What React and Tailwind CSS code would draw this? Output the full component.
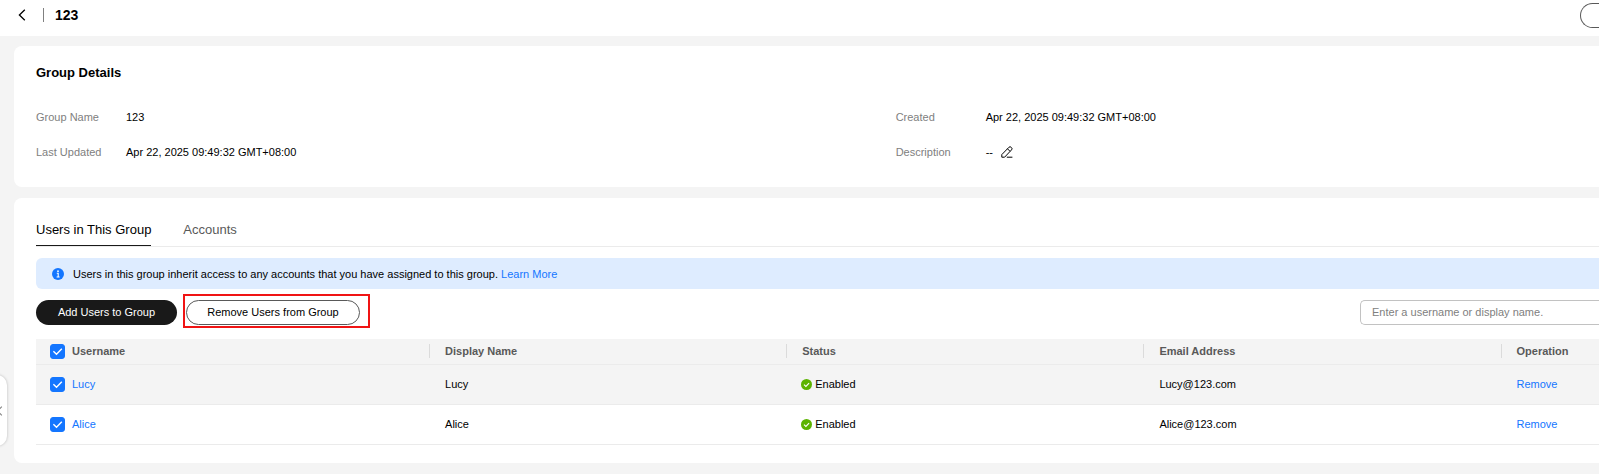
import { useState } from "react";

const users = [
  { id: "lucy", name: "Lucy", email: "Lucy@123.com" },
  { id: "alice", name: "Alice", email: "Alice@123.com" },
];

function ChevronLeft({ className }) {
  return (
    <svg viewBox="0 0 8 12" className={className} fill="none" stroke="currentColor" strokeWidth="1.3">
      <path d="M6.8 0.8 1.4 6l5.4 5.2" />
    </svg>
  );
}

function EditIcon() {
  return (
    <svg viewBox="0 0 12 12" className="size-3" fill="none" stroke="currentColor" strokeWidth="1" strokeLinejoin="round">
      <path d="M3.6 11.2H0.8V8.6L7.9 1.3a1.6 1.6 0 0 1 2.3 0l0.3 0.3a1.6 1.6 0 0 1 0 2.3Z" />
      <path d="M6.5 2.8 9 5.3M5.8 11.2h5.6" />
    </svg>
  );
}

function InfoIcon() {
  return (
    <svg viewBox="0 0 12 12" className="size-3 shrink-0">
      <circle cx="6" cy="6" r="6" fill="#1476ff" />
      <circle cx="6" cy="3.2" r="0.9" fill="#fff" />
      <path d="M4.8 5.2h1.4v3.6M4.6 9h3" fill="none" stroke="#fff" strokeWidth="1.1" />
    </svg>
  );
}

function EnabledIcon() {
  return (
    <svg viewBox="0 0 11 11" className="size-[11px]">
      <circle cx="5.5" cy="5.5" r="5.5" fill="#5cb300" />
      <path d="M3 5.6 4.9 7.4 8.1 4.2" fill="none" stroke="#fff" strokeWidth="1.1" />
    </svg>
  );
}

function Checkbox({ label, checked, onChange }) {
  return (
    <span className="grid size-[15px] shrink-0">
      <input
        type="checkbox"
        aria-label={label}
        checked={checked}
        onChange={onChange}
        className="col-start-1 row-start-1 size-[15px] appearance-none rounded-[3px] border border-[#c2c2c2] bg-white checked:border-[#1476ff] checked:bg-[#1476ff]"
      />
      {checked && (
        <svg viewBox="0 0 15 15" className="pointer-events-none col-start-1 row-start-1 size-[15px]" fill="none" stroke="#fff" strokeWidth="1.4">
          <path d="M3.4 7.2 6.5 10.2 11.8 4.8" />
        </svg>
      )}
    </span>
  );
}

function Field({ label, children }) {
  return (
    <div className="flex h-[35px] items-center">
      <dt className="w-[90px] text-[#808080]">{label}</dt>
      <dd className="flex items-center gap-2">{children}</dd>
    </div>
  );
}

function HeadCell({ children }) {
  return (
    <th className="p-0 text-left font-bold">
      <div className="flex h-[14px] items-center border-l border-[#dbdbdb] pl-[15px]">{children}</div>
    </th>
  );
}

export default function App() {
  const [selected, setSelected] = useState(users.map((u) => u.id));
  const [query, setQuery] = useState("");

  const allSelected = selected.length === users.length;

  function toggle(id) {
    setSelected((prev) => (prev.includes(id) ? prev.filter((x) => x !== id) : [...prev, id]));
  }

  return (
    <div className="relative min-h-screen overflow-hidden bg-[#f4f4f4] font-['Liberation_Sans',Arial,sans-serif] text-[11px] leading-4 text-black">
      <header className="flex h-9 items-start justify-between bg-white pt-[3px] pl-[18px]">
        <div className="flex h-[23px] items-center">
          <button type="button" aria-label="Back">
            <ChevronLeft className="h-3 w-2" />
          </button>
          <span className="ml-[17px] h-[14px] w-px bg-[#808080]" />
          <h1 className="ml-[11px] text-sm leading-4 font-bold">123</h1>
        </div>
        <button
          type="button"
          aria-label="More actions"
          className="h-[25px] w-[19px] rounded-l-full border border-r-0 border-[#595959] bg-white"
        />
      </header>

      <main className="flex flex-col gap-[11px] pt-[10px] pl-[14px]">
        <section className="rounded-l-lg bg-white pt-[18px] pb-[18px] pl-[22px]">
          <h2 className="text-[13px] leading-[18px] font-bold">Group Details</h2>
          <dl className="mt-[17px] grid grid-cols-[55%_45%]">
            <Field label="Group Name">123</Field>
            <Field label="Created">Apr 22, 2025 09:49:32 GMT+08:00</Field>
            <Field label="Last Updated">Apr 22, 2025 09:49:32 GMT+08:00</Field>
            <Field label="Description">
              <span>--</span>
              <button type="button" aria-label="Edit description">
                <EditIcon />
              </button>
            </Field>
          </dl>
        </section>

        <section className="rounded-l-lg bg-white pt-[18px] pb-[18px] pl-[22px]">
          <div role="tablist" className="flex gap-8 border-b border-[#ebebeb] text-[13px]">
            <button type="button" role="tab" aria-selected="true" className="h-[30px] border-b border-[#191919] pb-[2px]">
              Users in This Group
            </button>
            <button type="button" role="tab" aria-selected="false" className="h-[30px] pb-[2px] text-[#595959]">
              Accounts
            </button>
          </div>

          <div className="mt-[11px] flex h-[31px] items-center rounded-l-md bg-[#deecff] pl-4">
            <InfoIcon />
            <p className="ml-[9px]">
              Users in this group inherit access to any accounts that you have assigned to this group.{" "}
              <a href="#learn-more" className="text-[#1476ff]">
                Learn More
              </a>
            </p>
          </div>

          <div className="mt-[11px] flex justify-between">
            <div className="flex gap-[9px]">
              <button type="button" className="h-[25px] w-[141px] rounded-full bg-[#191919] pb-[2px] text-white">
                Add Users to Group
              </button>
              <div className="relative">
                <button type="button" className="h-[25px] w-[174px] rounded-full border border-[#595959] bg-white pb-[2px]">
                  Remove Users from Group
                </button>
                <span className="pointer-events-none absolute -top-[6px] -right-[10px] -bottom-[3px] -left-[3px] border-2 border-[#f01414]" />
              </div>
            </div>
            <input
              type="text"
              aria-label="Search users"
              placeholder="Enter a username or display name."
              value={query}
              onChange={(e) => setQuery(e.target.value)}
              className="h-[25px] w-[239px] rounded-l-[5px] border border-r-0 border-[#c2c2c2] bg-white pb-[2px] pl-[11px] placeholder:text-[#808080]"
            />
          </div>

          <table className="mt-[14px] w-full table-fixed border-collapse">
            <colgroup>
              <col className="w-[25.15%]" />
              <col className="w-[22.85%]" />
              <col className="w-[22.85%]" />
              <col className="w-[22.85%]" />
              <col />
            </colgroup>
            <thead>
              <tr className="h-[25px] border-b border-[#ebebeb] bg-[#f4f4f4] text-[#595959]">
                <th className="p-0 pl-[14px] text-left font-bold">
                  <div className="flex items-center gap-[7px]">
                    <Checkbox
                      label="Select all users"
                      checked={allSelected}
                      onChange={() => setSelected(allSelected ? [] : users.map((u) => u.id))}
                    />
                    Username
                  </div>
                </th>
                <HeadCell>Display Name</HeadCell>
                <HeadCell>Status</HeadCell>
                <HeadCell>Email Address</HeadCell>
                <HeadCell>Operation</HeadCell>
              </tr>
            </thead>
            <tbody>
              {users.map((u) => (
                <tr key={u.id} className="h-10 border-b border-[#ebebeb] first:bg-[#f4f4f4]">
                  <td className="p-0 pl-[14px]">
                    <div className="flex items-center gap-[7px]">
                      <Checkbox
                        label={`Select ${u.name}`}
                        checked={selected.includes(u.id)}
                        onChange={() => toggle(u.id)}
                      />
                      <a href={`#${u.id}`} className="text-[#1476ff]">
                        {u.name}
                      </a>
                    </div>
                  </td>
                  <td className="p-0 pl-4">{u.name}</td>
                  <td className="p-0 pl-[15px]">
                    <div className="flex items-center gap-[3px]">
                      <EnabledIcon />
                      Enabled
                    </div>
                  </td>
                  <td className="p-0 pl-4">{u.email}</td>
                  <td className="p-0 pl-4">
                    <button type="button" className="text-[#1476ff]">
                      Remove
                    </button>
                  </td>
                </tr>
              ))}
            </tbody>
          </table>
        </section>
      </main>

      {/* handle of the collapsed side menu */}
      <button
        type="button"
        aria-label="Toggle side menu"
        className="absolute top-[375px] -left-[13px] flex h-[71px] w-5 items-center rounded-r-[10px] bg-white pl-[9px] text-[#808080] shadow-[0_0_3px_rgba(0,0,0,0.25)]"
      >
        <ChevronLeft className="h-[10px] w-[7px]" />
      </button>
    </div>
  );
}
